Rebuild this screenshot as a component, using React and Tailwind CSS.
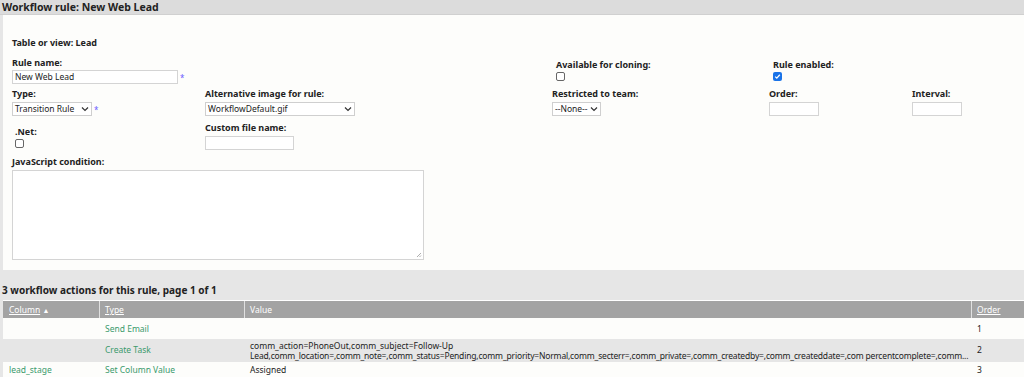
import React from "react";

const font = { fontFamily: '"Noto Sans", "Open Sans", sans-serif' };

function Chevron() {
  return (
    <svg width="8" height="6" viewBox="0 0 8 6" className="shrink-0">
      <path d="M1 1.5 L4 4.5 L7 1.5" fill="none" stroke="#333" strokeWidth="1.2" />
    </svg>
  );
}

function Select({ value, w }) {
  return (
    <div className={`flex items-center justify-between h-[14px] border border-[#cfcfcf] bg-white px-[2px] text-[8.5px] text-[#222] whitespace-nowrap ${w}`}>
      <span className="leading-none">{value}</span>
      <Chevron />
    </div>
  );
}

function Input({ w, value }) {
  return (
    <div className={`h-[14px] border border-[#d4d4d4] bg-white px-[2px] text-[8.5px] leading-[12px] text-[#222] ${w}`}>{value}</div>
  );
}

function Label({ children, className = "" }) {
  return <div className={`text-[9px] font-bold leading-[11px] text-[#222] ${className}`}>{children}</div>;
}

function Checkbox({ checked }) {
  if (checked) {
    return (
      <div className="w-[9px] h-[9px] rounded-[2px] bg-[#1a73e8] flex items-center justify-center">
        <svg width="7" height="7" viewBox="0 0 7 7">
          <path d="M1.2 3.6 L2.8 5.1 L5.8 1.8" fill="none" stroke="white" strokeWidth="1.3" />
        </svg>
      </div>
    );
  }
  return <div className="w-[9px] h-[9px] rounded-[2px] border border-[#666] bg-white" />;
}

function Star() {
  return <span className="text-[#6b5cff] text-[8px] leading-none ml-[2px] mt-[1px]">*</span>;
}

export default function App() {
  return (
    <div style={font} className="w-[1024px] h-[377px] bg-[#e6e6e6] overflow-hidden">
      <div className="h-[15px] bg-[#dcdcdc] pl-[2px] text-[10.5px] font-bold leading-[14px] text-[#222] border-b border-[#d0d0d0]">
        Workflow rule: New Web Lead
      </div>
      <div className="ml-[3px] h-[255px] bg-[#fdfdfb] relative">
        <div className="pl-[9px] pt-[22px]">
          <Label>Table or view: Lead</Label>
        </div>
        {/* Row 1 */}
        <div className="flex mt-[9px]">
          <div className="pl-[9px] w-[553px]">
            <Label>Rule name:</Label>
            <div className="flex items-center mt-[2px]">
              <Input w="w-[166px]" value="New Web Lead" />
              <Star />
            </div>
          </div>
          <div className="w-[217px] pt-[2px]">
            <Label>Available for cloning:</Label>
            <div className="mt-[2px]"><Checkbox /></div>
          </div>
          <div className="pt-[2px]">
            <Label>Rule enabled:</Label>
            <div className="mt-[2px]"><Checkbox checked /></div>
          </div>
        </div>
        {/* Row 2 */}
        <div className="flex mt-[4px]">
          <div className="pl-[9px] w-[202px]">
            <Label>Type:</Label>
            <div className="flex items-center mt-[3px]">
              <Select value="Transition Rule" w="w-[80px]" />
              <Star />
            </div>
          </div>
          <div className="w-[347px]">
            <Label>Alternative image for rule:</Label>
            <div className="mt-[3px]"><Select value="WorkflowDefault.gif" w="w-[150px]" /></div>
          </div>
          <div className="w-[217px]">
            <Label>Restricted to team:</Label>
            <div className="mt-[3px]"><Select value="--None--" w="w-[49px]" /></div>
          </div>
          <div className="w-[143px]">
            <Label>Order:</Label>
            <div className="mt-[3px]"><Input w="w-[50px]" /></div>
          </div>
          <div>
            <Label>Interval:</Label>
            <div className="mt-[3px]"><Input w="w-[50px]" /></div>
          </div>
        </div>
        {/* Row 3 */}
        <div className="flex mt-[6px]">
          <div className="pl-[12px] w-[202px] pt-[4px]">
            <Label>.Net:</Label>
            <div className="mt-[2px]"><Checkbox /></div>
          </div>
          <div>
            <Label>Custom file name:</Label>
            <div className="mt-[3px]"><Input w="w-[89px]" /></div>
          </div>
        </div>
        {/* Row 4 */}
        <div className="pl-[9px] mt-[6px]">
          <Label>JavaScript condition:</Label>
          <div className="mt-[3px] w-[412px] h-[90px] border border-[#d4d4d4] bg-white relative">
            <svg width="6" height="6" viewBox="0 0 6 6" className="absolute right-[1px] bottom-[1px]">
              <path d="M5 1 L1 5 M5 3.5 L3.5 5" stroke="#999" strokeWidth="0.8" />
            </svg>
          </div>
        </div>
      </div>
      <div className="h-[14px]" />
      <div className="pl-[2px] text-[10px] font-bold leading-[12px] text-[#222]">3 workflow actions for this rule, page 1 of 1</div>
      <div className="ml-[3px] mt-[4px] border-t border-white">
        <div className="flex h-[17px] bg-[#a3a3a3] text-[8.5px] text-white leading-[17px]">
          <div className="w-[97px] pl-[6px] border-r border-[#e0e0e0]"><span className="underline">Column</span> <span className="text-[7px]">▲</span></div>
          <div className="w-[145px] pl-[5px] border-r border-[#e0e0e0]"><span className="underline">Type</span></div>
          <div className="w-[727px] pl-[5px] border-r border-[#e0e0e0]">Value</div>
          <div className="flex-1 pl-[5px]"><span className="underline">Order</span></div>
        </div>
        <div className="flex h-[21px] bg-[#fdfdfb] text-[8.5px] leading-[21px]">
          <div className="w-[97px] pl-[6px]"></div>
          <div className="w-[145px] pl-[5px] text-[#3a9a6c]">Send Email</div>
          <div className="w-[727px] pl-[5px]"></div>
          <div className="flex-1 pl-[5px] text-[#222]">1</div>
        </div>
        <div className="flex h-[23px] bg-[#e6e6e6] text-[8.5px] items-center">
          <div className="w-[97px] pl-[6px]"></div>
          <div className="w-[145px] pl-[5px] text-[#3a9a6c]">Create Task</div>
          <div className="w-[727px] pl-[5px] text-[#222] leading-[10px] whitespace-nowrap overflow-hidden">
            <div>comm_action=PhoneOut,comm_subject=Follow-Up</div>
            <div className="tracking-[-0.17px]">Lead,comm_location=,comm_note=,comm_status=Pending,comm_priority=Normal,comm_secterr=,comm_private=,comm_createdby=,comm_createddate=,com percentcomplete=,comm...</div>
          </div>
          <div className="flex-1 pl-[5px] text-[#222]">2</div>
        </div>
        <div className="flex h-[16px] bg-[#fdfdfb] text-[8.5px] leading-[16px]">
          <div className="w-[97px] pl-[6px] text-[#3a9a6c]">lead_stage</div>
          <div className="w-[145px] pl-[5px] text-[#3a9a6c]">Set Column Value</div>
          <div className="w-[727px] pl-[5px] text-[#222]">Assigned</div>
          <div className="flex-1 pl-[5px] text-[#222]">3</div>
        </div>
      </div>
    </div>
  );
}
